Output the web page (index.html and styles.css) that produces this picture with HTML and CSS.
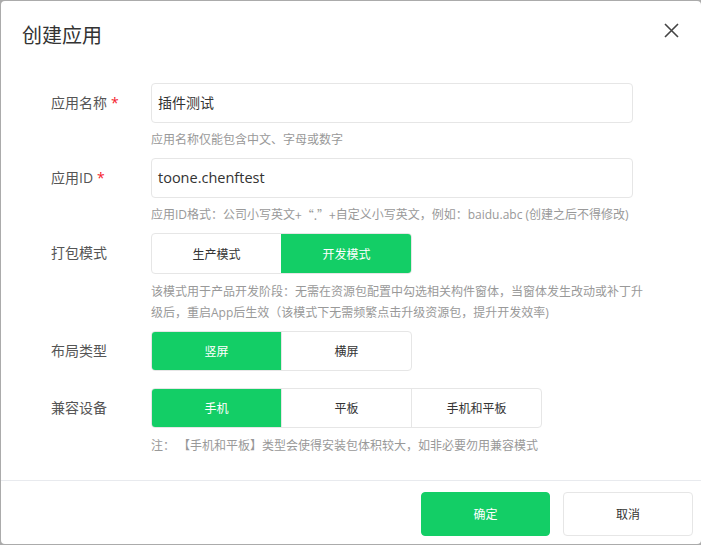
FILE: index.html
```html
<!DOCTYPE html>
<html lang="zh-CN">
<head>
<meta charset="utf-8">
<title>创建应用</title>
<link rel="stylesheet" href="styles.css">
</head>
<body>
<div class="dialog">
  <div class="header">
    <div class="title">创建应用</div>
    <svg class="close" width="15" height="15" viewBox="0 0 15 15"><path d="M1 1L14 14M14 1L1 14" stroke="#444" stroke-width="1.6" fill="none"/></svg>
  </div>
  <div class="body">
    <div class="item">
      <div class="label">应用名称<span class="req">*</span></div>
      <div class="ctrl">
        <div class="input">插件测试</div>
        <div class="help">应用名称仅能包含中文、字母或数字</div>
      </div>
    </div>
    <div class="item">
      <div class="label">应用ID<span class="req">*</span></div>
      <div class="ctrl">
        <div class="input latin">toone.chenftest</div>
        <div class="help">应用ID格式：公司小写英文<span class="cjk">+“.”+</span>自定义小写英文，例如：baidu.abc (创建之后不得修改)</div>
      </div>
    </div>
    <div class="item">
      <div class="label">打包模式</div>
      <div class="ctrl">
        <div class="seg tall">
          <div class="opt">生产模式</div>
          <div class="opt on">开发模式</div>
        </div>
        <div class="help desc">该模式用于产品开发阶段：无需在资源包配置中勾选相关构件窗体，当窗体发生改动或补丁升级后，重启App后生效（该模式下无需频繁点击升级资源包，提升开发效率)</div>
      </div>
    </div>
    <div class="item nohelp">
      <div class="label">布局类型</div>
      <div class="ctrl">
        <div class="seg">
          <div class="opt on">竖屏</div>
          <div class="opt">横屏</div>
        </div>
      </div>
    </div>
    <div class="item">
      <div class="label">兼容设备</div>
      <div class="ctrl">
        <div class="seg">
          <div class="opt on">手机</div>
          <div class="opt">平板</div>
          <div class="opt">手机和平板</div>
        </div>
        <div class="help note">注：&nbsp;【手机和平板】类型会使得安装包体积较大，如非必要勿用兼容模式</div>
      </div>
    </div>
  </div>
  <div class="footer">
    <div class="btn primary">确定</div>
    <div class="btn">取消</div>
  </div>
</div>
</body>
</html>
```
FILE: styles.css
```css
html, body {
  margin: 0;
  padding: 0;
}
body {
  background: #ababab;
  width: 701px;
  height: 545px;
  overflow: hidden;
  font-family: "Open Sans", "Noto Sans CJK SC", sans-serif;
  color: #333;
}
.dialog {
  margin: 1px 0 0 1px;
  width: 700px;
  height: 543px;
  background: #fff;
  border-radius: 4px;
  display: flex;
  flex-direction: column;
}
.header {
  height: 70px;
  display: flex;
  justify-content: space-between;
  align-items: flex-start;
  padding: 0 22px 0 21px;
  box-sizing: border-box;
}
.title {
  margin-top: 22px;
  font-size: 20px;
  line-height: 26px;
  color: #333;
}
.close {
  margin-top: 22px;
}
.body {
  flex: 1;
  padding-top: 12px;
}
.item {
  display: flex;
  margin-bottom: 8px;
}
.item.nohelp {
  margin-bottom: 17px;
}
.label {
  width: 100px;
  padding-left: 50px;
  height: 40px;
  line-height: 40px;
  font-size: 14px;
  color: #555;
}
.req {
  color: #f5222d;
  margin-left: 4px;
}
.ctrl {
  display: flex;
  flex-direction: column;
  align-items: flex-start;
}
.input {
  width: 482px;
  height: 40px;
  box-sizing: border-box;
  border: 1px solid #e6e6e6;
  border-radius: 4px;
  padding-left: 6px;
  line-height: 38px;
  font-size: 14px;
  color: #333;
}
.input.latin {
  font-size: 14.5px;
}
.help {
  margin-top: 7px;
  font-size: 12px;
  line-height: 20px;
  height: 20px;
  color: #999;
  white-space: nowrap;
}
.cjk {
  font-family: "Noto Sans CJK SC", sans-serif;
  vertical-align: top;
}
.help.desc {
  white-space: normal;
  width: 496px;
  height: auto;
  line-height: 21px;
}
.help.note {
  margin-top: 8px;
}
.seg {
  display: flex;
  height: 40px;
  border: 1px solid #e6e6e6;
  border-radius: 4px;
  box-sizing: border-box;
  overflow: hidden;
}
.seg.tall {
  height: 41px;
}
.opt {
  width: 130px;
  box-sizing: border-box;
  display: flex;
  align-items: center;
  justify-content: center;
  font-size: 12px;
  color: #333;
  border-left: 1px solid #e6e6e6;
}
.opt:first-child {
  border-left: none;
  width: 129px;
}
.opt.on {
  background: #13ce66;
  color: #fff;
  border-left-color: #13ce66;
}
.footer {
  border-top: 1px solid #e8eaee;
  height: 64px;
  box-sizing: border-box;
  padding: 11px 8px 0 0;
  display: flex;
  justify-content: flex-end;
  gap: 13px;
}
.btn {
  width: 130px;
  height: 44px;
  box-sizing: border-box;
  border: 1px solid #e6e6e6;
  border-radius: 4px;
  display: flex;
  align-items: center;
  justify-content: center;
  font-size: 12px;
  color: #333;
}
.btn.primary {
  width: 129px;
  background: #13ce66;
  border-color: #13ce66;
  color: #fff;
}
```
